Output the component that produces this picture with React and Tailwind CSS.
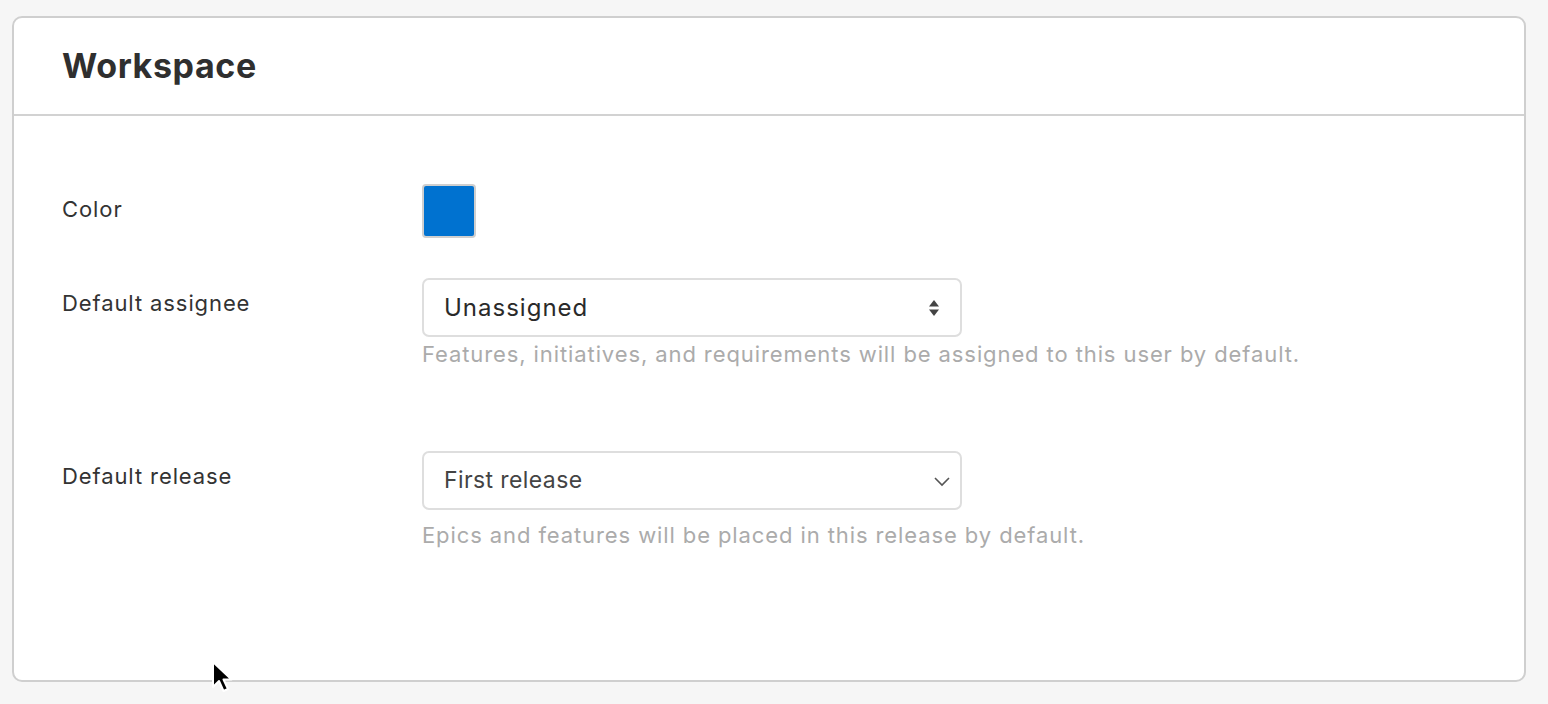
import React from "react";

function UpDown() {
  return (
    <svg width="12" height="18" viewBox="0 0 12 18" className="shrink-0">
      <path d="M6 1 L11 7.5 H1 Z" fill="#444" />
      <path d="M6 17 L11 10.5 H1 Z" fill="#444" />
    </svg>
  );
}

function Chevron() {
  return (
    <svg width="18" height="12" viewBox="0 0 18 12" className="shrink-0">
      <path d="M2 3 L9 10 L16 3" fill="none" stroke="#555" strokeWidth="1.6" />
    </svg>
  );
}

function Cursor() {
  return (
    <svg width="24" height="36" viewBox="0 0 24 36">
      <path
        d="M2 2 L2 27 L8 21 L12.5 31 L17 29 L12.5 19.5 L20.5 19.5 Z"
        fill="#000"
        stroke="#fff"
        strokeWidth="2"
        strokeLinejoin="round"
      />
    </svg>
  );
}

export default function App() {
  return (
    <div
      className="relative w-[1548px] h-[704px] bg-[#f6f6f6] overflow-hidden pt-[16px] pl-[12px]"
      style={{ fontFamily: "Inter, 'Noto Sans', sans-serif" }}
    >
      <div className="w-[1514px] h-[666px] bg-white border-2 border-[#cfcfcf] rounded-[10px] flex flex-col">
        <div className="h-[98px] border-b-2 border-[#d2d2d2] flex items-center pl-[48px]">
          <h1 className="text-[34px] font-bold text-[#2f2f2f] tracking-[0.6px] leading-none pb-[0px]">
            Workspace
          </h1>
        </div>
        <div className="flex flex-col pl-[48px] pt-[68px]">
          <div className="flex items-center">
            <div className="w-[360px] text-[22px] text-[#333] tracking-[0.9px] pb-[4px]">Color</div>
            <div className="w-[54px] h-[54px] rounded-[4px] border-2 border-[#cfcfcf] bg-[#0072d0]" />
          </div>

          <div className="flex mt-[40px]">
            <div className="w-[360px] text-[22px] text-[#333] tracking-[0.9px] pt-[9px]">Default assignee</div>
            <div className="flex flex-col">
              <div className="w-[540px] h-[59px] rounded-[7px] border-2 border-[#dedede] flex items-center justify-between pl-[20px] pr-[20px]">
                <span className="text-[24px] text-[#2a2a2a] tracking-[1px]">Unassigned</span>
                <UpDown />
              </div>
              <div className="text-[22px] text-[#ababab] tracking-[0.9px] mt-[2px] leading-[30px]">
                Features, initiatives, and requirements will be assigned to this user by default.
              </div>
            </div>
          </div>

          <div className="flex mt-[82px]">
            <div className="w-[360px] text-[22px] text-[#333] tracking-[0.9px] pt-[9px]">Default release</div>
            <div className="flex flex-col">
              <div className="w-[540px] h-[59px] rounded-[7px] border-2 border-[#dedede] flex items-center justify-between pl-[20px] pr-[9px]">
                <span className="text-[23px] text-[#444] tracking-[0.4px]">First release</span>
                <Chevron />
              </div>
              <div className="text-[22px] text-[#ababab] tracking-[0.9px] mt-[10px] leading-[30px]">
                Epics and features will be placed in this release by default.
              </div>
            </div>
          </div>
        </div>
      </div>
      <div className="absolute left-[211px] top-[660px]">
        <Cursor />
      </div>
    </div>
  );
}
